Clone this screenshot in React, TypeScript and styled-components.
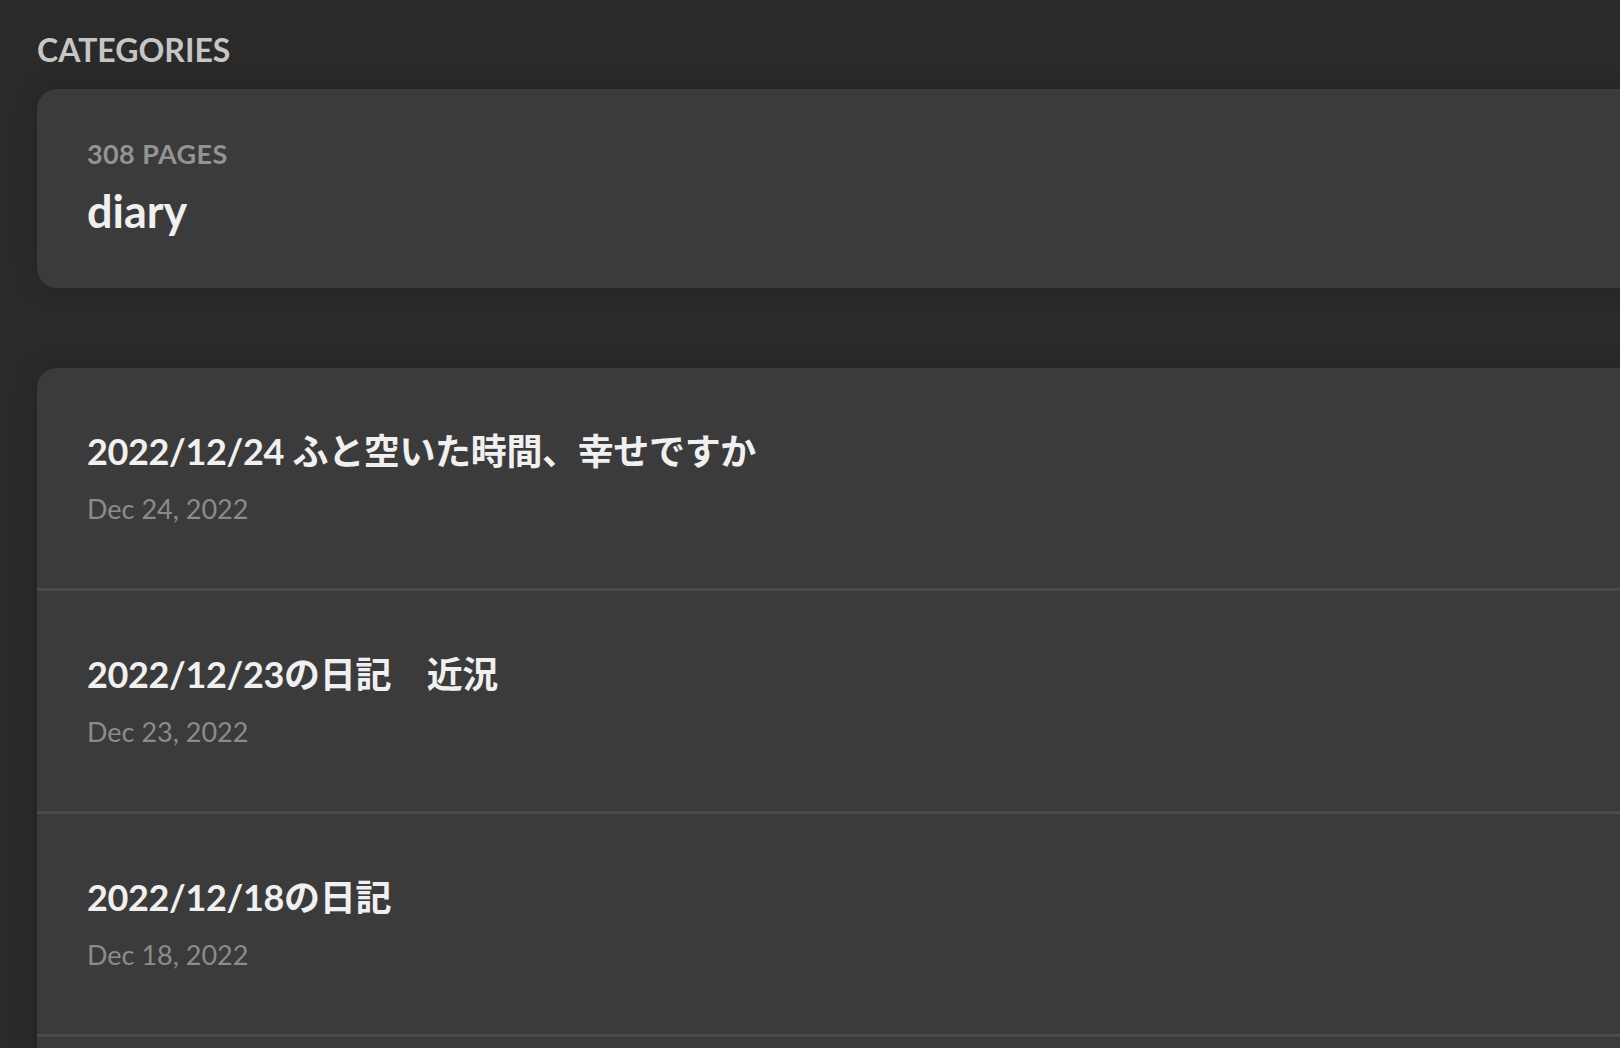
import React from 'react';
import styled, {createGlobalStyle} from 'styled-components';

const GlobalStyle = createGlobalStyle`
  html, body {
    margin: 0;
    padding: 0;
    background: #2a2a2a;
    overflow: hidden;
  }
  body {
    font-family: Lato, "Noto Sans CJK JP", "Noto Sans", sans-serif;
  }
`;

const Page = styled.main`
  padding: 31px 0 0 37px;
  min-height: 100vh;
  box-sizing: border-box;
`;

const SectionTitle = styled.h2`
  margin: 0 0 20px;
  font-size: 32px;
  line-height: 1.2;
  font-weight: 700;
  color: #c6c6c6;
`;

const Card = styled.section`
  background: #3b3b3b;
  border-radius: 20px;
  margin-right: -40px;
  box-shadow: 0 0 22px rgba(0, 0, 0, 0.18);
  overflow: hidden;
`;

const CategoryCard = styled(Card)`
  padding: 49px 50px 50px;
  display: flex;
  flex-direction: column;
  gap: 13px;
`;

const Count = styled.div`
  font-size: 27px;
  line-height: 1.2;
  font-weight: 700;
  color: #939393;
  letter-spacing: 0.4px;
`;

const CategoryName = styled.div`
  font-size: 45px;
  line-height: 1.2;
  font-weight: 700;
  color: #f0f0f0;
`;

const ListCard = styled(Card)`
  margin-top: 80px;
  padding-bottom: 60px;
`;

const Row = styled.article`
  height: 220px;
  padding: 0 50px;
  box-sizing: content-box;
  display: flex;
  flex-direction: column;
  justify-content: center;
  gap: 19px;
  border-bottom: 3px solid #4b4b4b;
`;

const PostTitle = styled.div`
  font-size: 36px;
  line-height: 1.2;
  font-weight: 700;
  color: #f0f0f0;
  letter-spacing: -0.35px;
  font-family: Lato, "Noto Sans CJK JP", sans-serif;
`;

const PostDate = styled.div`
  font-size: 27px;
  line-height: 1.2;
  font-weight: 400;
  color: #8b8b8b;
`;

const posts = [
  {title: '2022/12/24 ふと空いた時間、幸せですか', date: 'Dec 24, 2022'},
  {title: '2022/12/23の日記\u3000近況', date: 'Dec 23, 2022'},
  {title: '2022/12/18の日記', date: 'Dec 18, 2022'},
];

const App: React.FC = () => (
  <>
    <GlobalStyle />
    <Page>
      <SectionTitle>CATEGORIES</SectionTitle>
      <CategoryCard>
        <Count>308 PAGES</Count>
        <CategoryName>diary</CategoryName>
      </CategoryCard>
      <ListCard>
        {posts.map(post => (
          <Row key={post.date}>
            <PostTitle>{post.title}</PostTitle>
            <PostDate>{post.date}</PostDate>
          </Row>
        ))}
      </ListCard>
    </Page>
  </>
);

export default App;
